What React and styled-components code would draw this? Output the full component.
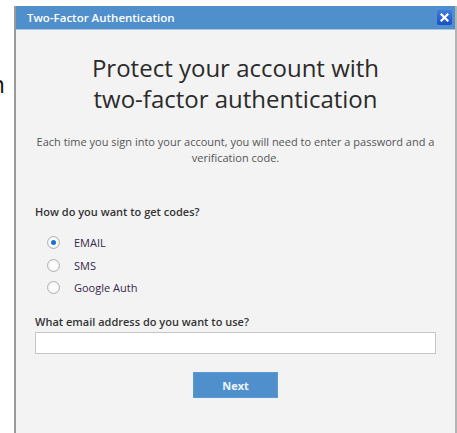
import React, { useState } from "react";
import styled, { createGlobalStyle } from "styled-components";

const GlobalStyle = createGlobalStyle`
  html, body {
    margin: 0;
    padding: 0;
    background: #ffffff;
  }
  body {
    font-family: "Open Sans", "Noto Sans", sans-serif;
    color: #333;
  }
`;

const Page = styled.div`
  position: relative;
  width: 457px;
  height: 433px;
  overflow: hidden;
`;

// the page heading behind the dialog, mostly covered
const BehindHeading = styled.div`
  display: flex;
  justify-content: flex-end;
  width: 5px;
  padding-top: 67px;
  overflow: hidden;
  span {
    white-space: nowrap;
    font-size: 24px;
    color: #111;
  }
`;

const Dialog = styled.div`
  position: absolute;
  left: 14px;
  top: 6px;
  width: 439px;
  height: 460px;
  background: #f3f3f3;
  border-left: 2px solid #9a9a9a;
  border-right: 2px solid #b4b4b4;
  display: flex;
  flex-direction: column;
`;

const TitleBar = styled.div`
  height: 23px;
  background: #4f8fcc;
  border-bottom: 1px solid #a9c6e4;
  display: flex;
  align-items: center;
  justify-content: space-between;
  padding: 0 3px 0 11px;
  color: #fff;
  font-size: 11.5px;
  font-weight: 600;
`;

const CloseButton = styled.button`
  width: 15px;
  height: 15px;
  padding: 0;
  border: none;
  border-radius: 2px;
  background: linear-gradient(#3f7be0, #1d4fc2);
  display: flex;
  align-items: center;
  justify-content: center;
  cursor: pointer;
`;

const Body = styled.div`
  padding: 22px 19px 0;
  display: flex;
  flex-direction: column;
`;

const Heading = styled.h1`
  margin: 0;
  text-align: center;
  font-size: 24px;
  font-weight: 400;
  line-height: 31px;
  color: #2b2b2b;
`;

const Intro = styled.p`
  margin: 20px 0 0;
  text-align: center;
  font-size: 11px;
  line-height: 16px;
  color: #555;
`;

const Label = styled.div`
  font-size: 11px;
  font-weight: 600;
  color: #333;
  margin-top: ${(p) => p.$top}px;
`;

const Options = styled.div`
  display: flex;
  flex-direction: column;
  gap: 7.5px;
  margin-top: 16px;
  padding-left: 12px;
`;

const Option = styled.label`
  display: flex;
  align-items: center;
  gap: 14px;
  font-size: 11px;
  line-height: 15px;
  color: #35284a;
  cursor: pointer;
`;

const RadioDot = styled.span`
  width: 11px;
  height: 11px;
  border-radius: 50%;
  border: 1px solid #b3b3b3;
  background: radial-gradient(circle, #fdfdfd 40%, #e4e4e4 100%);
  display: flex;
  align-items: center;
  justify-content: center;
  &::after {
    content: "";
    width: 5px;
    height: 5px;
    border-radius: 50%;
    background: ${(p) => (p.$checked ? "#1a6fd6" : "transparent")};
  }
`;

const EmailInput = styled.input`
  box-sizing: border-box;
  margin-top: 3px;
  width: 401px;
  height: 22px;
  border: 1px solid #c6c6c6;
  background: #fff;
  padding: 0 4px;
  font-family: inherit;
  font-size: 11px;
  outline: none;
`;

const NextButton = styled.button`
  align-self: center;
  margin-top: 18px;
  width: 85px;
  height: 26px;
  border: 1px solid #5d9ad4;
  background: #4f8fcc;
  color: #eef5fc;
  font-family: inherit;
  font-size: 11px;
  font-weight: 700;
  cursor: pointer;
`;

const methods = ["EMAIL", "SMS", "Google Auth"];

export default function App() {
  const [method, setMethod] = useState("EMAIL");

  return (
    <Page>
      <GlobalStyle />
      <BehindHeading>
        <span>Two-factor authentication</span>
      </BehindHeading>
      <Dialog>
        <TitleBar>
          <span>Two-Factor Authentication</span>
          <CloseButton aria-label="Close">
            <svg width="9" height="9" viewBox="0 0 9 9">
              <path d="M1.5 1.5 L7.5 7.5 M7.5 1.5 L1.5 7.5" stroke="#fff" strokeWidth="2.2" strokeLinecap="square" />
            </svg>
          </CloseButton>
        </TitleBar>
        <Body>
          <Heading>
            Protect your account with
            <br />
            two-factor authentication
          </Heading>
          <Intro>
            Each time you sign into your account, you will need to enter a password and a verification code.
          </Intro>
          <Label $top={38}>How do you want to get codes?</Label>
          <Options>
            {methods.map((m) => (
              <Option key={m} onClick={() => setMethod(m)}>
                <RadioDot $checked={method === m} />
                {m}
              </Option>
            ))}
          </Options>
          <Label $top={19}>What email address do you want to use?</Label>
          <EmailInput type="text" />
          <NextButton>Next</NextButton>
        </Body>
      </Dialog>
    </Page>
  );
}
